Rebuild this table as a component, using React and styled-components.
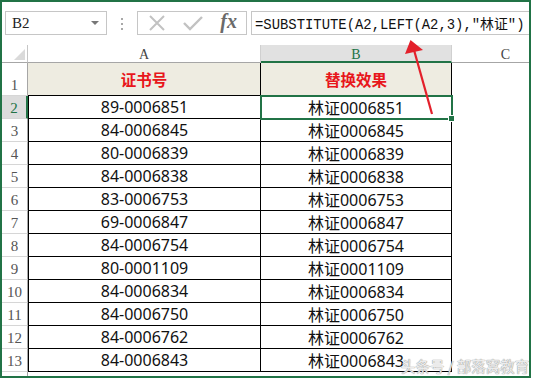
import React from 'react';
import styled, { createGlobalStyle } from 'styled-components';

const rows = [
  ['89-0006851', '林证0006851'],
  ['84-0006845', '林证0006845'],
  ['80-0006839', '林证0006839'],
  ['84-0006838', '林证0006838'],
  ['83-0006753', '林证0006753'],
  ['69-0006847', '林证0006847'],
  ['84-0006754', '林证0006754'],
  ['80-0001109', '林证0001109'],
  ['84-0006834', '林证0006834'],
  ['84-0006750', '林证0006750'],
  ['84-0006762', '林证0006762'],
  ['84-0006843', '林证0006843'],
];

const GlobalStyle = createGlobalStyle`
  body {
    margin: 0;
    background: #fff;
  }
`;

const App = () => {
  return (
    <>
      <GlobalStyle />
      <Frame>
        {/* 编辑栏 */}
        <Toolbar>
          <NameBox>
            <span>B2</span>
            <Caret />
          </NameBox>
          <Grip>
            <i /><i /><i />
          </Grip>
          <ButtonGroup>
            <svg width="18" height="18" viewBox="0 0 18 18">
              <path d="M2 2 L16 16 M16 2 L2 16" stroke="#c2c2c2" strokeWidth="2" fill="none" />
            </svg>
            <svg width="20" height="16" viewBox="0 0 20 16">
              <path d="M1 8 L7 14 L19 2" stroke="#c2c2c2" strokeWidth="2.4" fill="none" />
            </svg>
            <Fx>fx</Fx>
          </ButtonGroup>
          <FormulaBox>=SUBSTITUTE(A2,LEFT(A2,3),"林证")</FormulaBox>
        </Toolbar>

        {/* 工作表 */}
        <Sheet>
          <Corner />
          <ColHeader>A</ColHeader>
          <ColHeader $selected>B</ColHeader>
          <ColHeader>C</ColHeader>

          <RowHeader>1</RowHeader>
          <Cell $title>证书号</Cell>
          <Cell $title>替换效果</Cell>
          <Blank />

          {rows.map(([a, b], i) => (
            <React.Fragment key={i}>
              <RowHeader $selected={i === 0}>{i + 2}</RowHeader>
              <Cell $edge>{a}</Cell>
              <Cell $active={i === 0}>{b}</Cell>
              <Blank />
            </React.Fragment>
          ))}

          {/* 被裁掉的第14行 */}
          <RowHeader />
          <Blank />
          <Blank />
          <Blank />
        </Sheet>

        <Arrow width="534" height="378" viewBox="0 0 534 378">
          <line x1="432" y1="114" x2="414" y2="50" stroke="#e3202b" strokeWidth="2.2" />
          <polygon points="410.5,40 405,54 423,50" fill="#e3202b" />
        </Arrow>

        <Watermark>头条号 / 部落窝教育</Watermark>
      </Frame>
    </>
  );
};

const Frame = styled.div`
  position: relative;
  width: 531px;
  height: 378px;
  box-sizing: border-box;
  border: 2px solid #217346;
  overflow: hidden;
  background: #fff;
  display: flex;
  flex-direction: column;
`;

const Toolbar = styled.div`
  display: flex;
  align-items: flex-start;
  height: 43px;
  box-sizing: border-box;
  padding: 9px 0 0 3px;
  flex-shrink: 0;
`;

const NameBox = styled.div`
  width: 102px;
  height: 24px;
  box-sizing: border-box;
  border: 1px solid #c6c6c6;
  display: flex;
  align-items: center;
  justify-content: space-between;
  padding: 0 7px 0 6px;
  font-family: "Liberation Serif", serif;
  font-size: 15px;
  color: #222;
`;

const Caret = styled.i`
  width: 0;
  height: 0;
  border-left: 4px solid transparent;
  border-right: 4px solid transparent;
  border-top: 4px solid #777;
`;

const Grip = styled.div`
  display: flex;
  flex-direction: column;
  gap: 3px;
  margin: 7px 14px 0;

  i {
    display: block;
    width: 2px;
    height: 2px;
    background: #a8a8a8;
  }
`;

const ButtonGroup = styled.div`
  width: 110px;
  height: 24px;
  box-sizing: border-box;
  border: 1px solid #c6c6c6;
  display: flex;
  align-items: center;
  justify-content: space-between;
  padding: 0 9px 0 10px;
`;

const Fx = styled.span`
  font-family: "Liberation Serif", serif;
  font-style: italic;
  font-weight: bold;
  font-size: 20px;
  color: #6a6a6a;
  margin-top: -3px;
`;

const FormulaBox = styled.div`
  flex: 1;
  margin-left: 4px;
  height: 24px;
  box-sizing: border-box;
  border: 1px solid #c6c6c6;
  border-right: none;
  padding-left: 3px;
  display: flex;
  align-items: center;
  font-family: "Liberation Mono", "Noto Sans CJK SC", monospace;
  font-size: 13.9px;
  color: #111;
  white-space: nowrap;
`;

const Sheet = styled.div`
  display: grid;
  width: max-content;
  grid-template-columns: 26px 233px 191px 108px;
  grid-template-rows: 18px 33px repeat(12, 23px) 23px;
`;

const Corner = styled.div`
  position: relative;
  box-sizing: border-box;
  border-right: 1px solid #c6c6c6;
  border-bottom: 1px solid #a6a6a6;

  &::after {
    content: '';
    position: absolute;
    right: 2px;
    bottom: 2px;
    width: 0;
    height: 0;
    border-left: 11px solid transparent;
    border-bottom: 11px solid #dadada;
  }
`;

const ColHeader = styled.div`
  box-sizing: border-box;
  display: flex;
  align-items: center;
  justify-content: center;
  padding-top: 3px;
  font-family: "Liberation Serif", serif;
  font-size: 14px;
  color: ${p => (p.$selected ? '#217346' : '#444')};
  background: ${p => (p.$selected ? '#e1e1e1' : '#fff')};
  border-right: 1px solid #d0d0d0;
  border-bottom: ${p => (p.$selected ? '2px solid #217346' : '1px solid #a6a6a6')};
`;

const RowHeader = styled.div`
  box-sizing: border-box;
  display: flex;
  align-items: flex-end;
  justify-content: center;
  padding-bottom: 2px;
  line-height: 1;
  font-family: "Liberation Serif", serif;
  font-size: 15px;
  color: ${p => (p.$selected ? '#217346' : '#555')};
  background: ${p => (p.$selected ? '#dcdcdc' : '#fff')};
  border-right: ${p => (p.$selected ? '2px solid #217346' : '1px solid #a6a6a6')};
  border-bottom: 1px solid #d6d6d6;
`;

const Cell = styled.div`
  position: relative;
  box-sizing: border-box;
  display: flex;
  align-items: center;
  justify-content: center;
  font-family: "Noto Sans", "Noto Sans CJK SC", sans-serif;
  font-size: 16px;
  color: #111;
  border-right: 1px solid #000;
  border-bottom: 1px solid #000;
  border-left: ${p => (p.$edge ? '1px solid #000' : 'none')};

  ${p => p.$title && `
    background: #eeece1;
    color: #e8161b;
    font-weight: bold;
    font-family: "Noto Sans CJK SC", sans-serif;
    font-size: 15.5px;
  `}

  ${p => p.$active && `
    z-index: 1;
    outline: 2px solid #217346;
    outline-offset: -1px;

    &::after {
      content: '';
      position: absolute;
      right: -4px;
      bottom: -4px;
      width: 5px;
      height: 5px;
      background: #217346;
      border: 1px solid #fff;
    }
  `}
`;

const Blank = styled.div`
  background: #fff;
`;

const Arrow = styled.svg`
  position: absolute;
  left: -2px;
  top: -2px;
  pointer-events: none;
  z-index: 2;
`;

const Watermark = styled.div`
  position: absolute;
  left: 399px;
  top: 353px;
  z-index: 3;
  font-family: "Noto Sans CJK SC", sans-serif;
  font-size: 14.5px;
  color: #ececec;
  text-shadow: 0 0 1px #8c8c8c, 0 0 1px #a0a0a0;
  white-space: nowrap;
`;

export default App;
